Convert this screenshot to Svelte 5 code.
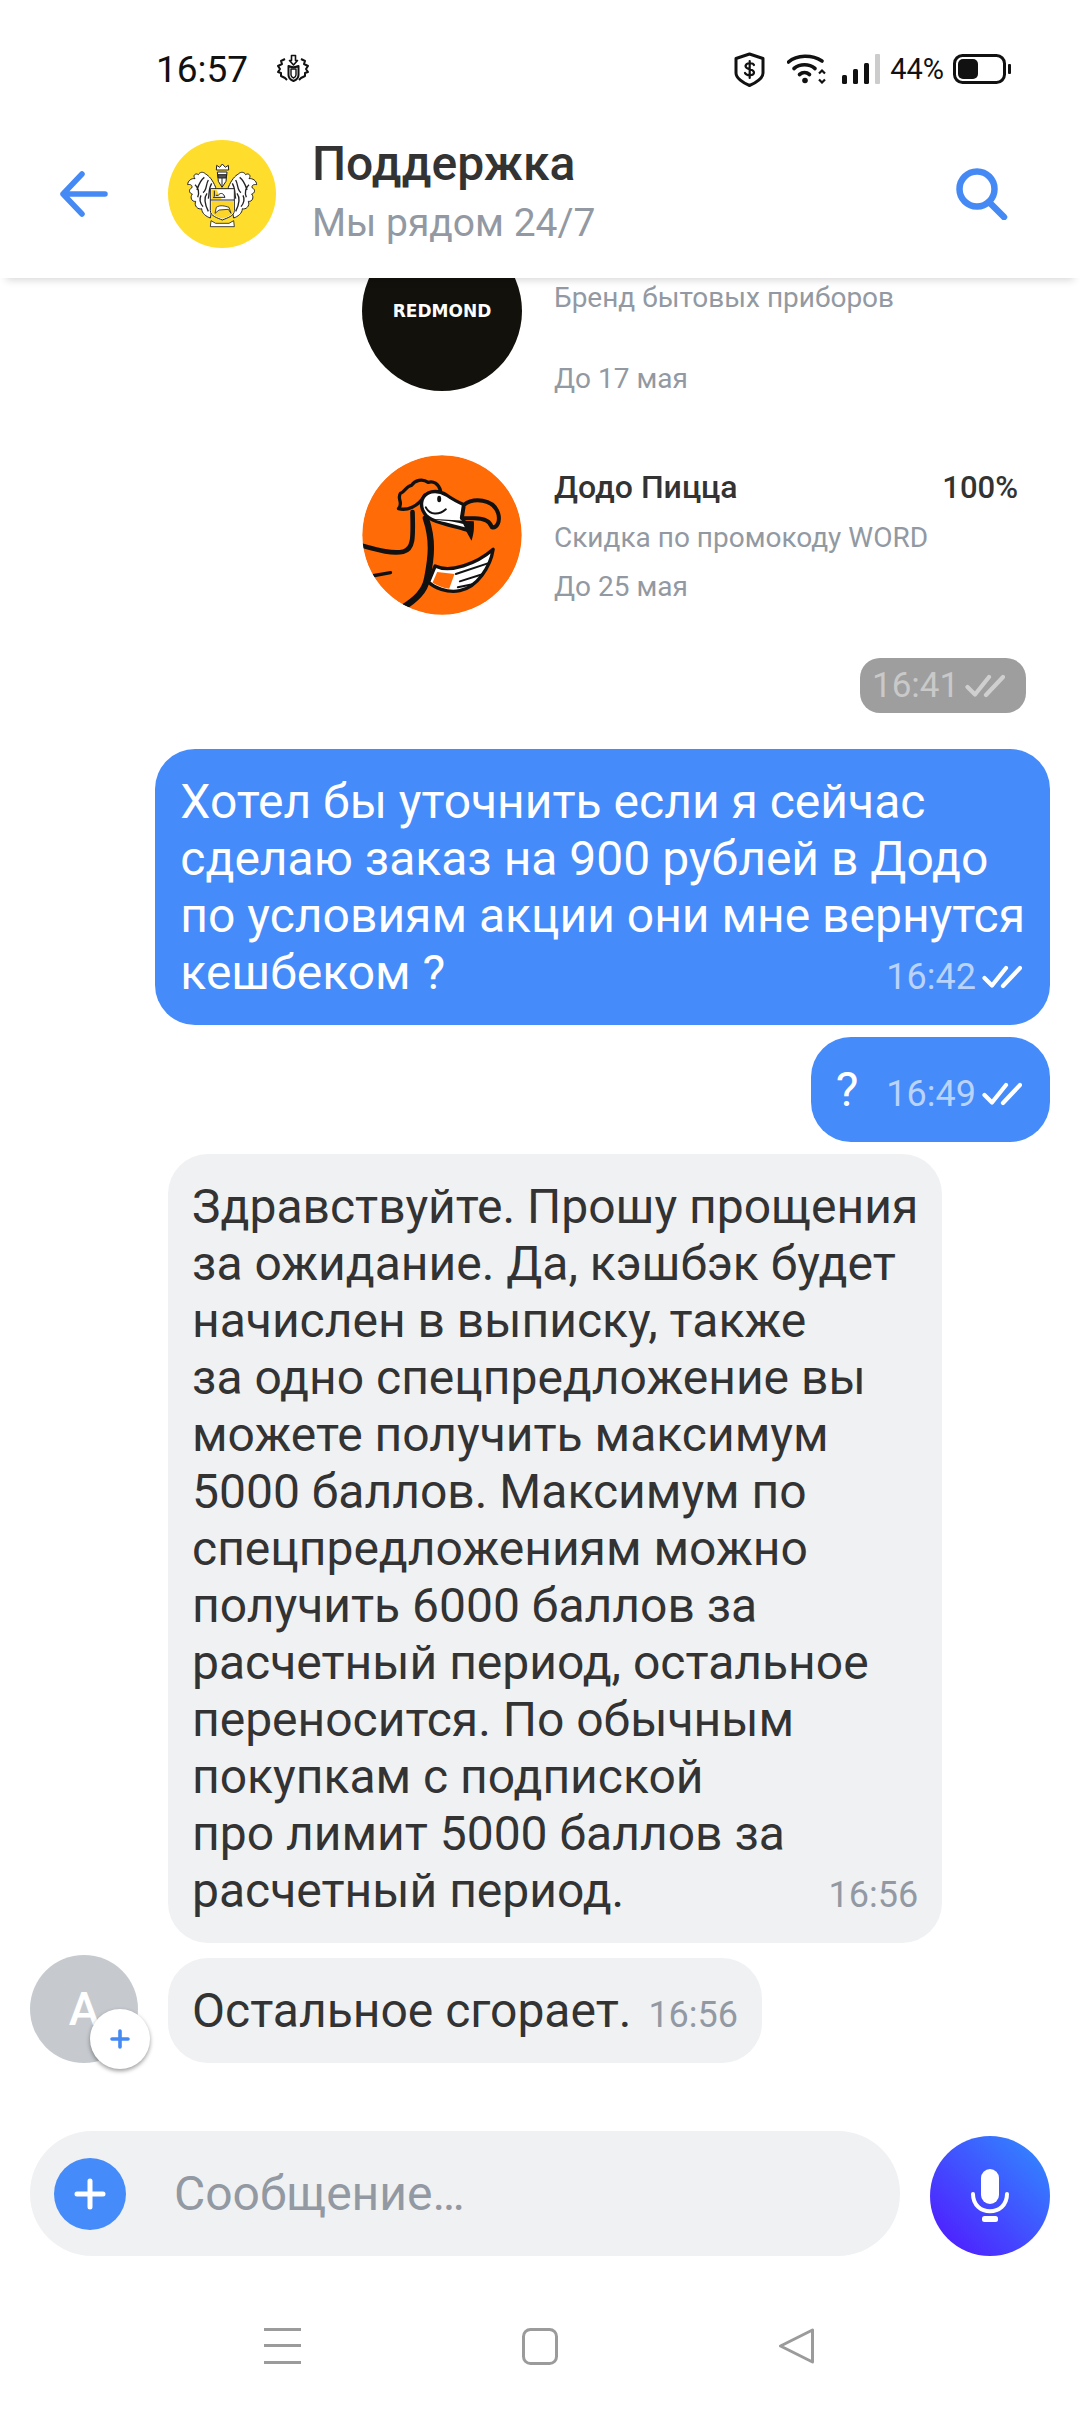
<script>
  const grayLines = [
    'Здравствуйте. Прошу прощения',
    'за ожидание. Да, кэшбэк будет',
    'начислен в выписку, также',
    'за одно спецпредложение вы',
    'можете получить максимум',
    '5000 баллов. Максимум по',
    'спецпредложениям можно',
    'получить 6000 баллов за',
    'расчетный период, остальное',
    'переносится. По обычным',
    'покупкам с подпиской',
    'про лимит 5000 баллов за'
  ];
  const blueLines = [
    'Хотел бы уточнить если я сейчас',
    'сделаю заказ на 900 рублей в Додо',
    'по условиям акции они мне вернутся'
  ];
</script>

{#snippet checks(color)}
  <svg class="checks" viewBox="0 0 40 24" fill="none" stroke={color} stroke-width="4.2" stroke-linecap="round" stroke-linejoin="round">
    <path d="M2.5 13 L10 20.5 L24 3" />
    <path d="M21 21 L38 3" />
  </svg>
{/snippet}

<div class="screen">
  <div class="status">
    <span class="clock">16:57</span>
    <svg class="st-gear" viewBox="0 0 34 30" fill="none" stroke="#111" stroke-width="2" stroke-linejoin="round">
      <path d="M15.5 1.5 h4 v5 h2 l-4 4.5 -4-4.5 h2 z" stroke-width="1.6" />
      <path d="M12.5 12 c3 1.5 7 1.5 10 0 v9 c0 3-2.5 5-5 6 c-2.5-1-5-3-5-6 z" />
      <path d="M15 15 h5 v6 c0 1.5-1 2.4-2.5 3 c-1.5-.6-2.5-1.5-2.5-3 z" stroke-width="1.4" />
      <path d="M9 5 l-4 2 1 3-4 2 2 3-2 3 3 1 0 3 4 2 2 2 M25 5 l4 2-1 3 4 2-2 3 2 3-3 1 0 3-4 2-2 2" />
    </svg>
    <span class="st-right">
      <svg class="st-shield" viewBox="0 0 31 35" fill="none" stroke="#111">
        <path d="M15.5 2 L29 6.5 V21 C29 26 22 31 15.5 33.5 C9 31 2 26 2 21 V6.5 Z" stroke-width="3" stroke-linejoin="round" />
        <path d="M20 13 C19 10.5 12 10.5 11.5 14 C11.5 18 20 16.5 20 20.5 C20 24 12.5 24 11 21 M15.7 9 V26" stroke-width="2.2" stroke-linecap="round" />
      </svg>
      <svg class="st-wifi" viewBox="0 0 40 30" fill="none" stroke="#111" stroke-width="3.6" stroke-linecap="round">
        <path d="M1.5 8 C10 0.5 25 0.5 35 7" />
        <path d="M7 14.5 C13 9.5 22 9.5 28 14.5" />
        <path d="M12.5 20.5 C15.5 18 19.5 18 22.5 20.5" />
        <circle cx="18" cy="26.5" r="2.8" fill="#111" stroke="none" />
        <path d="M32 19.5 l3-3 3 3 M32 25.5 l3 3 3-3" stroke-width="2.2" stroke-linecap="butt" />
      </svg>
      <svg class="st-signal" viewBox="0 0 38 30">
        <rect x="0" y="21" width="5" height="9" rx="1.5" fill="#111" />
        <rect x="11" y="15" width="5" height="15" rx="1.5" fill="#111" />
        <rect x="22" y="9" width="5" height="21" rx="1.5" fill="#111" />
        <rect x="33" y="0" width="5" height="30" rx="1" fill="#ccc" />
      </svg>
      <span class="st-pct">44%</span>
      <svg class="st-batt" viewBox="0 0 58 30">
        <rect x="1.5" y="1.5" width="50" height="27" rx="8" fill="none" stroke="#111" stroke-width="3" />
        <rect x="5" y="5" width="20" height="20" rx="5" fill="#111" />
        <rect x="55" y="10" width="3" height="10" rx="1" fill="#111" />
      </svg>
    </span>
  </div>

  <header class="header">
    <svg class="back" viewBox="0 0 48 46" fill="none" stroke="#4589f5" stroke-width="5.5" stroke-linecap="round" stroke-linejoin="round">
      <path d="M22 3 L3 23 L22 43 M3 23 H45" />
    </svg>
    <svg class="crest" viewBox="-21 -30 324 324">
      <circle cx="141" cy="132" r="162" fill="#fedd2c" />
      <g stroke="#222" stroke-width="3" stroke-linejoin="round">
        <path d="M122 112 C112 88 102 78 92 72 C84 64 74 66 70 74 C62 68 52 76 60 86 C50 84 38 92 38 104 C46 102 54 106 50 114 C40 118 42 130 52 132 C44 142 50 156 62 154 C56 168 70 180 80 176 C80 190 94 200 106 204 Z" fill="#fff" />
        <path d="M160 112 C170 88 180 78 190 72 C198 64 208 66 212 74 C220 68 230 76 222 86 C232 84 245 92 245 104 C237 102 228 106 232 114 C242 118 240 130 230 132 C238 142 232 156 220 154 C226 168 212 180 202 176 C202 190 188 200 176 204 Z" fill="#fff" />
        <path d="M100 90 C92 104 96 120 84 128 M88 82 C74 92 70 108 66 120 M96 130 C84 146 92 168 100 184 M78 136 C72 148 76 160 84 170 M110 100 C100 116 104 130 100 146 M60 104 C70 112 74 128 68 142" fill="none" stroke-width="4" />
        <path d="M182 90 C190 104 186 120 198 128 M194 82 C208 92 212 108 216 120 M186 130 C198 146 190 168 182 184 M204 136 C210 148 206 160 198 170 M172 100 C182 116 178 130 182 146 M222 104 C212 112 208 128 214 142" fill="none" stroke-width="4" />
        <path d="M106 116 H178 V182 C178 198 156 204 142 210 C128 204 106 198 106 182 Z" fill="#fff" />
        <path d="M109 119 H124 L140 148 H109 Z M109 153 H175 V182 C175 195 155 201 142 206 C129 201 109 195 109 182 Z" fill="#fbd52a" stroke="none" />
        <path d="M106 150 H178" fill="none" stroke-width="3" />
        <path d="M118 122 V140 M114 142 H150 L146 134 C140 128 134 130 130 136 L122 136" fill="#fff" stroke-width="3" />
        <path d="M120 190 L124 172 C135 164 150 168 162 172 L168 190 L160 178 L132 180 Z" fill="#fff" stroke-width="2.5" />
        <path d="M127 66 H156 L153 94 L141 112 L130 94 Z" fill="#fff" />
        <path d="M128 74 H155 L153 84 H130 Z M141 84 V110" fill="#555" stroke-width="3" />
        <path d="M124 60 L125 46 L134 52 L142 42 L151 52 L160 46 L161 60 Z" fill="#fff" />
        <path d="M108 212 L122 220 H162 L176 212 L178 230 H106 Z" fill="#fff" stroke-width="2.5" />
      </g>
    </svg>
    <div class="head-text">
      <div class="head-title">Поддержка</div>
      <div class="head-sub">Мы рядом 24/7</div>
    </div>
    <svg class="search" viewBox="0 0 52 52" fill="none" stroke="#4589f5" stroke-width="6.5" stroke-linecap="round">
      <circle cx="21" cy="21" r="17.5" />
      <path d="M33 34 L48 49" />
    </svg>
  </header>

  <main class="feed">
    <section class="promos">
      <div class="promo first">
        <div class="logo redmond"><span>REDMOND</span></div>
        <div class="promo-body">
          <div class="promo-sub">Бренд бытовых приборов</div>
          <div class="promo-sub late">До 17 мая</div>
        </div>
      </div>
      <div class="promo">
        <svg class="logo" viewBox="38 15 477 480">
          <defs><clipPath id="dodoclip"><circle cx="276.5" cy="255" r="239" /></clipPath></defs>
          <circle cx="276.5" cy="255" r="239" fill="#ff6b06" />
          <g clip-path="url(#dodoclip)" stroke="#111" stroke-linejoin="round" stroke-linecap="round">
            <path d="M30 285 C90 302 130 312 160 305 C192 298 190 260 188 186" fill="none" stroke-width="14" />
            <path d="M66 378 L122 368" fill="none" stroke-width="10" />
            <path d="M228 205 C250 270 245 320 232 385 C225 425 195 450 160 472" fill="none" stroke-width="19" />
            <path d="M225 135 C205 172 170 182 146 176 C162 160 140 145 152 130 C166 126 168 108 185 106 C195 90 218 85 235 97 C250 92 266 100 272 122 Z" fill="#ff6b06" stroke-width="10" />
            <path d="M217 150 C226 124 258 116 290 135 C308 148 328 158 346 166 L336 204 C345 215 350 228 350 240 C310 226 240 218 224 190 C214 176 213 165 217 150 Z" fill="#fff" stroke-width="10" />
            <path d="M342 165 C370 143 430 145 445 190 C452 215 441 235 426 232 C420 210 400 204 370 205 L336 204 Z" fill="#ff6b06" stroke-width="12" />
            <path d="M242 206 C270 226 310 226 345 236 L365 272 C373 250 373 232 372 214 L345 212 Z" fill="#111" stroke="none" />
            <path d="M256 209 C280 216 315 222 345 232 L340 222 C310 212 280 212 256 209 Z" fill="#fff" stroke="none" />
            <ellipse cx="268" cy="147" rx="6" ry="10" fill="#111" stroke="none" />
            <path d="M228 172 C240 196 268 196 288 178" fill="none" stroke-width="6" />
            <path d="M430 298 C422 350 382 412 330 422 C292 430 252 412 236 396 L256 348 C300 370 380 342 430 298 Z" fill="#fff" stroke-width="10" />
            <path d="M262 366 L314 372 L298 416 C280 414 262 406 248 398 Z" fill="#ff6b06" stroke="none" />
            <path d="M318 372 L414 340 M330 394 L400 372 M324 412 L372 402" fill="none" stroke-width="6" />
          </g>
        </svg>
        <div class="promo-body">
          <div class="promo-title"><span>Додо Пицца</span><span class="promo-val">100%</span></div>
          <div class="promo-sub">Скидка по промокоду WORD</div>
          <div class="promo-sub">До 25 мая</div>
        </div>
      </div>
    </section>

    <div class="pill">
      <span>16:41</span>
      {@render checks('#cfcfcf')}
    </div>

    <div class="bubble out b1">
      {#each blueLines as l}<div class="ln">{l}</div>{/each}
      <div class="ln last"><span>кешбеком ?</span><span class="meta"><span class="time">16:42</span>{@render checks('#fff')}</span></div>
    </div>

    <div class="bubble out b2">
      <div class="ln last"><span>?</span><span class="meta"><span class="time">16:49</span>{@render checks('#fff')}</span></div>
    </div>

    <div class="bubble in b3">
      {#each grayLines as l}<div class="ln">{l}</div>{/each}
      <div class="ln last"><span>расчетный период.</span><span class="time">16:56</span></div>
    </div>

    <div class="row-last">
      <div class="avatar">
        <span>А</span>
        <div class="badge">
          <svg viewBox="0 0 20 20" fill="none" stroke="#4589f5" stroke-width="3.6" stroke-linecap="round"><path d="M10 2 V18 M2 10 H18" /></svg>
        </div>
      </div>
      <div class="bubble in b4">
        <div class="ln last"><span>Остальное сгорает.</span><span class="time">16:56</span></div>
      </div>
    </div>
  </main>

  <div class="composer">
    <div class="input">
      <div class="plus">
        <svg viewBox="0 0 32 32" fill="none" stroke="#fff" stroke-width="5" stroke-linecap="round"><path d="M16 3 V29 M3 16 H29" /></svg>
      </div>
      <span class="placeholder">Сообщение…</span>
    </div>
    <div class="mic">
      <svg viewBox="0 0 38 54" fill="none">
        <rect x="10" y="0" width="18" height="35" rx="9" fill="#fff" />
        <path d="M2 25 C2 48 36 48 36 25" stroke="#fff" stroke-width="4" stroke-linecap="round" />
        <rect x="11" y="47" width="16" height="6" rx="2.5" fill="#fff" />
      </svg>
    </div>
  </div>

  <nav class="nav">
    <svg class="nv-menu" viewBox="0 0 37 36"><rect y="0" width="37" height="3" fill="#9b9b9b" /><rect y="16" width="37" height="3" fill="#9b9b9b" /><rect y="33" width="37" height="3" fill="#9b9b9b" /></svg>
    <svg class="nv-home" viewBox="0 0 36 37"><rect x="1.5" y="1.5" width="33" height="34" rx="7" fill="none" stroke="#9b9b9b" stroke-width="3" /></svg>
    <svg class="nv-back" viewBox="0 0 37 36"><path d="M34.5 2 V34 L2.5 18 Z" fill="none" stroke="#9b9b9b" stroke-width="3" stroke-linejoin="round" /></svg>
  </nav>
</div>

<style>
  :global(body) { margin: 0; background: #fff; }
  .screen {
    width: 1080px;
    height: 2412px;
    display: flex;
    flex-direction: column;
    overflow: hidden;
    background: #fff;
    font-family: Roboto, "Noto Sans", sans-serif;
    color: #333;
  }
  .status {
    height: 125px;
    flex: none;
    display: flex;
    align-items: flex-start;
    padding: 52px 69px 0 156px;
    box-sizing: border-box;
  }
  .clock { font-size: 37px; line-height: 36px; color: #111; }
  .st-gear { width: 34px; height: 30px; margin: 2px 0 0 28px; }
  .st-right { margin-left: auto; display: flex; align-items: flex-start; }
  .st-shield { width: 31px; height: 35px; }
  .st-wifi { width: 40px; height: 30px; margin: 2px 0 0 22px; }
  .st-signal { width: 38px; height: 30px; margin: 2px 0 0 15px; }
  .st-pct { font-size: 29px; line-height: 30px; color: #111; margin: 2px 0 0 10px; }
  .st-batt { width: 58px; height: 30px; margin: 2px 0 0 9px; }

  .header {
    flex: none;
    height: 153px;
    box-sizing: border-box;
    padding: 15px 72px 30px 60px;
    display: flex;
    align-items: center;
    background: #fff;
    position: relative;
    z-index: 2;
    box-shadow: 0 8px 8px -6px rgba(0, 0, 0, 0.16);
  }
  .back { width: 48px; height: 46px; flex: none; }
  .crest { width: 108px; height: 108px; flex: none; margin-left: 60px; }
  .head-text { margin-left: 36px; margin-top: -5px; }
  .head-title { font-size: 48px; line-height: 54px; font-weight: 500; color: #333; }
  .head-sub { font-size: 39px; line-height: 46px; color: #9299a2; margin-top: 9px; }
  .search { width: 52px; height: 52px; margin-left: auto; flex: none; }

  .feed {
    flex: 1;
    min-height: 0;
    overflow: hidden;
    display: flex;
    flex-direction: column;
    justify-content: flex-end;
    padding-bottom: 68px;
    box-sizing: border-box;
  }
  .promos {
    display: flex;
    flex-direction: column;
    flex: none;
    gap: 64px;
    padding: 0 62px 0 362px;
  }
  .promo { display: flex; gap: 32px; height: 160px; flex: none; }
  .logo { width: 160px; height: 160px; border-radius: 50%; flex: none; }
  .redmond {
    background: #12110c;
    display: flex;
    align-items: center;
    justify-content: center;
    color: #fff;
    font-family: "DejaVu Sans", sans-serif;
    font-size: 17px;
    font-weight: 700;
    line-height: 1;
  }
  .promo-body { flex: 1; padding-top: 7px; }
  .first { align-items: flex-end; }
  .first .promo-body { padding-top: 0; margin-bottom: -12px; }
  .promo-title {
    display: flex;
    justify-content: space-between;
    font-size: 32px;
    line-height: 51px;
    font-weight: 500;
    color: #333;
  }
  .promo-val { font-weight: 500; font-size: 31px; }
  .promo-sub { font-size: 28px; line-height: 49px; color: #9299a2; }
  .late { margin-top: 32px; }

  .pill {
    flex: none;
    align-self: flex-end;
    margin: 43px 54px 36px 0;
    width: 166px;
    height: 55px;
    box-sizing: border-box;
    padding-left: 12px;
    border-radius: 20px;
    background: #9e9e9e;
    display: flex;
    align-items: center;
    gap: 6px;
    color: #c9c9c9;
    font-size: 35px;
  }
  .checks { width: 40px; height: 24px; flex: none; }

  .bubble {
    box-sizing: border-box;
    padding: 24px 25px;
    border-radius: 40px;
    font-size: 48px;
    line-height: 57px;
    flex: none;
  }
  .ln { white-space: nowrap; }
  .last { display: flex; justify-content: space-between; align-items: baseline; }
  .out { align-self: flex-end; margin-right: 30px; background: #458bf9; color: #fff; }
  .in { background: #f0f1f3; color: #333; padding-left: 24px; padding-right: 24px; }
  .b2 { margin-top: 12px; }
  .b2 .last { gap: 28px; }
  .b3 { align-self: flex-start; margin: 12px 0 12px 168px; }
  .meta { display: inline-flex; align-items: baseline; gap: 6px; margin-right: 3px; }
  .time { font-size: 36px; line-height: 40px; }
  .out .time { color: #bad3fb; }
  .in .time { color: #9299a2; }
  .b4 .last { gap: 17px; }

  .row-last { flex: none; display: flex; align-items: flex-end; gap: 30px; padding-left: 30px; }
  .avatar {
    width: 108px;
    height: 108px;
    border-radius: 50%;
    background: #c6cacf;
    position: relative;
    flex: none;
    display: flex;
    align-items: center;
    justify-content: center;
    color: #fff;
    font-size: 46px;
    font-weight: 500;
  }
  .badge {
    position: absolute;
    left: 60px;
    top: 54px;
    width: 60px;
    height: 60px;
    border-radius: 50%;
    background: #fff;
    box-shadow: 0 2px 4px rgba(0, 0, 0, 0.4);
    display: flex;
    align-items: center;
    justify-content: center;
  }
  .badge svg { width: 20px; height: 20px; }

  .composer { flex: none; height: 125px; display: flex; padding: 0 30px; gap: 30px; }
  .input {
    flex: 1;
    height: 125px;
    border-radius: 62px;
    background: #f0f1f3;
    display: flex;
    align-items: center;
    padding-left: 24px;
  }
  .plus {
    width: 72px;
    height: 72px;
    border-radius: 50%;
    background: #458bf9;
    display: flex;
    align-items: center;
    justify-content: center;
    flex: none;
  }
  .plus svg { width: 32px; height: 32px; }
  .placeholder { font-size: 48px; color: #9299a2; margin-left: 48px; }
  .mic {
    width: 120px;
    height: 120px;
    margin-top: 5px;
    border-radius: 50%;
    background: linear-gradient(45deg, #4f1fff 10%, #3383ff 90%);
    display: flex;
    align-items: center;
    justify-content: center;
    flex: none;
  }
  .mic svg { width: 38px; height: 54px; }

  .nav {
    flex: none;
    height: 156px;
    box-sizing: border-box;
    padding: 72px 265px 0 264px;
    display: flex;
    justify-content: space-between;
    align-items: flex-start;
  }
  .nv-menu, .nv-back { width: 37px; height: 36px; }
  .nv-home { width: 36px; height: 37px; }
</style>
